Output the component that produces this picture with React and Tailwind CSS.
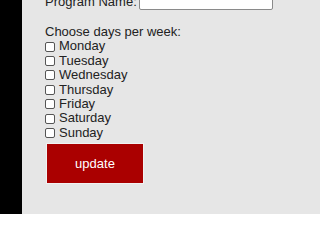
import React from 'react';

const DIAS = ['Monday', 'Tuesday', 'Wednesday', 'Thursday', 'Friday', 'Saturday', 'Sunday'];

export default function App() {
  return (
    <div className="flex w-[320px] h-[214px] overflow-hidden bg-[#e6e6e6] font-['Liberation_Sans',Arial,sans-serif] text-[13px] text-[#222]">
      <div className="w-[22px] shrink-0 bg-black" />
      <div className="flex flex-col pl-[23px] mt-[-7px]">
        <div className="flex items-center h-[17px]">
          <span className="leading-none">Program Name:</span>
          <input
            type="text"
            className="ml-[2px] w-[134px] h-[17px] bg-white border border-[#8a8a8a] rounded-[2px] outline-none"
          />
        </div>
        <div className="h-[15px]" />
        <div className="h-[14.4px] leading-[14.4px]">Choose days per week:</div>
        {DIAS.map(d => (
          <label key={d} className="flex items-center h-[14.4px] leading-[14.4px]">
            <span className="w-[10px] h-[10px] mr-[4px] bg-white border border-[#555] rounded-[2px]" />
            {d}
          </label>
        ))}
        <button
          type="button"
          className="mt-[3px] ml-[1px] w-[98px] h-[41px] bg-[#aa0000] border border-[#f2f2f2] text-white text-[13px]"
        >
          update
        </button>
      </div>
    </div>
  );
}
